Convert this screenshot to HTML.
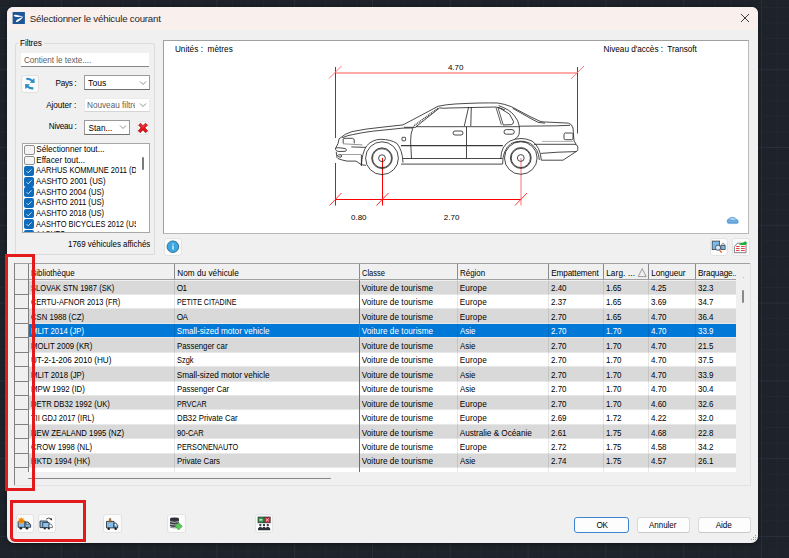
<!DOCTYPE html>
<html><head><meta charset="utf-8"><style>
html,body{margin:0;padding:0;}
body{width:789px;height:558px;overflow:hidden;position:relative;background:#1e232b;font-family:"Liberation Sans",sans-serif;}
*{box-sizing:border-box;}
.a{position:absolute;}
.t{position:absolute;white-space:nowrap;}
svg{position:absolute;overflow:visible;}
</style></head><body>
<svg style="left:0;top:0" width="789" height="558" viewBox="0 0 789 558"><rect x="-1.46" y="0" width="1" height="558" fill="#232831"/><rect x="14.10" y="0" width="1" height="558" fill="#232831"/><rect x="29.66" y="0" width="1" height="558" fill="#232831"/><rect x="45.22" y="0" width="1" height="558" fill="#232831"/><rect x="60.78" y="0" width="1" height="558" fill="#29303a"/><rect x="76.34" y="0" width="1" height="558" fill="#232831"/><rect x="91.90" y="0" width="1" height="558" fill="#232831"/><rect x="107.46" y="0" width="1" height="558" fill="#232831"/><rect x="123.02" y="0" width="1" height="558" fill="#232831"/><rect x="138.58" y="0" width="1" height="558" fill="#29303a"/><rect x="154.14" y="0" width="1" height="558" fill="#232831"/><rect x="169.70" y="0" width="1" height="558" fill="#232831"/><rect x="185.26" y="0" width="1" height="558" fill="#232831"/><rect x="200.82" y="0" width="1" height="558" fill="#232831"/><rect x="216.38" y="0" width="1" height="558" fill="#29303a"/><rect x="231.94" y="0" width="1" height="558" fill="#232831"/><rect x="247.50" y="0" width="1" height="558" fill="#232831"/><rect x="263.06" y="0" width="1" height="558" fill="#232831"/><rect x="278.62" y="0" width="1" height="558" fill="#232831"/><rect x="294.18" y="0" width="1" height="558" fill="#29303a"/><rect x="309.74" y="0" width="1" height="558" fill="#232831"/><rect x="325.30" y="0" width="1" height="558" fill="#232831"/><rect x="340.86" y="0" width="1" height="558" fill="#232831"/><rect x="356.42" y="0" width="1" height="558" fill="#232831"/><rect x="371.98" y="0" width="1" height="558" fill="#29303a"/><rect x="387.54" y="0" width="1" height="558" fill="#232831"/><rect x="403.10" y="0" width="1" height="558" fill="#232831"/><rect x="418.66" y="0" width="1" height="558" fill="#232831"/><rect x="434.22" y="0" width="1" height="558" fill="#232831"/><rect x="449.78" y="0" width="1" height="558" fill="#29303a"/><rect x="465.34" y="0" width="1" height="558" fill="#232831"/><rect x="480.90" y="0" width="1" height="558" fill="#232831"/><rect x="496.46" y="0" width="1" height="558" fill="#232831"/><rect x="512.02" y="0" width="1" height="558" fill="#232831"/><rect x="527.58" y="0" width="1" height="558" fill="#29303a"/><rect x="543.14" y="0" width="1" height="558" fill="#232831"/><rect x="558.70" y="0" width="1" height="558" fill="#232831"/><rect x="574.26" y="0" width="1" height="558" fill="#232831"/><rect x="589.82" y="0" width="1" height="558" fill="#232831"/><rect x="605.38" y="0" width="1" height="558" fill="#29303a"/><rect x="620.94" y="0" width="1" height="558" fill="#232831"/><rect x="636.50" y="0" width="1" height="558" fill="#232831"/><rect x="652.06" y="0" width="1" height="558" fill="#232831"/><rect x="667.62" y="0" width="1" height="558" fill="#232831"/><rect x="683.18" y="0" width="1" height="558" fill="#29303a"/><rect x="698.74" y="0" width="1" height="558" fill="#232831"/><rect x="714.30" y="0" width="1" height="558" fill="#232831"/><rect x="729.86" y="0" width="1" height="558" fill="#232831"/><rect x="745.42" y="0" width="1" height="558" fill="#232831"/><rect x="760.98" y="0" width="1" height="558" fill="#29303a"/><rect x="776.54" y="0" width="1" height="558" fill="#232831"/><rect x="0" y="6.92" width="789" height="1" fill="#232831"/><rect x="0" y="22.48" width="789" height="1" fill="#232831"/><rect x="0" y="38.04" width="789" height="1" fill="#232831"/><rect x="0" y="53.60" width="789" height="1" fill="#232831"/><rect x="0" y="69.16" width="789" height="1" fill="#29303a"/><rect x="0" y="84.72" width="789" height="1" fill="#232831"/><rect x="0" y="100.28" width="789" height="1" fill="#232831"/><rect x="0" y="115.84" width="789" height="1" fill="#232831"/><rect x="0" y="131.40" width="789" height="1" fill="#232831"/><rect x="0" y="146.96" width="789" height="1" fill="#29303a"/><rect x="0" y="162.52" width="789" height="1" fill="#232831"/><rect x="0" y="178.08" width="789" height="1" fill="#232831"/><rect x="0" y="193.64" width="789" height="1" fill="#232831"/><rect x="0" y="209.20" width="789" height="1" fill="#232831"/><rect x="0" y="224.76" width="789" height="1" fill="#29303a"/><rect x="0" y="240.32" width="789" height="1" fill="#232831"/><rect x="0" y="255.88" width="789" height="1" fill="#232831"/><rect x="0" y="271.44" width="789" height="1" fill="#232831"/><rect x="0" y="287.00" width="789" height="1" fill="#232831"/><rect x="0" y="302.56" width="789" height="1" fill="#29303a"/><rect x="0" y="318.12" width="789" height="1" fill="#232831"/><rect x="0" y="333.68" width="789" height="1" fill="#232831"/><rect x="0" y="349.24" width="789" height="1" fill="#232831"/><rect x="0" y="364.80" width="789" height="1" fill="#232831"/><rect x="0" y="380.36" width="789" height="1" fill="#29303a"/><rect x="0" y="395.92" width="789" height="1" fill="#232831"/><rect x="0" y="411.48" width="789" height="1" fill="#232831"/><rect x="0" y="427.04" width="789" height="1" fill="#232831"/><rect x="0" y="442.60" width="789" height="1" fill="#232831"/><rect x="0" y="458.16" width="789" height="1" fill="#29303a"/><rect x="0" y="473.72" width="789" height="1" fill="#232831"/><rect x="0" y="489.28" width="789" height="1" fill="#232831"/><rect x="0" y="504.84" width="789" height="1" fill="#232831"/><rect x="0" y="520.40" width="789" height="1" fill="#232831"/><rect x="0" y="535.96" width="789" height="1" fill="#29303a"/><rect x="0" y="551.52" width="789" height="1" fill="#232831"/></svg>
<div class="a" style="left:7px;top:7px;width:751px;height:535.5px;background:#f0f0f0;border-radius:7px;box-shadow:0 1px 5px rgba(0,0,0,0.45);"></div>
<div class="a" style="left:7px;top:7px;width:751px;height:23px;background:#f9efed;border-radius:6px 6px 0 0;"></div>
<svg style="left:12px;top:12px" width="13" height="12" viewBox="12 12 13 12"><rect x="12.6" y="12" width="12.3" height="12" fill="#1f5796"/><path d="M13.7 15.3Q15 14.5 18 15.2L23.4 16.6Q19 17.3 15.5 16.8Q14 16.5 13.7 15.3Z" fill="#fff"/><path d="M15.9 21.9Q15.7 20.8 17.5 19.5L23.4 16.6Q21.6 19.6 19 21.1Q17 22.3 15.9 21.9Z" fill="#fff"/></svg>
<div class="t" style="left:29.80px;top:14.00px;font-size:9.7px;line-height:9.7px;color:#1f1f1f;letter-spacing:-0.2px;">Sélectionner le véhicule courant</div>
<svg style="left:740px;top:13px" width="10" height="10" viewBox="0 0 10 10"><path d="M1 1L9 9M9 1L1 9" stroke="#333" stroke-width="0.95"/></svg>
<div class="a" style="left:14.5px;top:42.5px;width:140.5px;height:212.0px;border:1px solid #dcdcdc;border-radius:2px;"></div>
<div class="a" style="left:18px;top:38px;width:26px;height:10px;background:#f0f0f0;"></div>
<div class="t" style="left:20.00px;top:40.00px;font-size:8.2px;line-height:8.2px;color:#000;letter-spacing:-0.083px;">Filtres</div>
<div class="a" style="left:20.7px;top:53px;width:128.3px;height:14.299999999999997px;background:#fff;border-bottom:1px solid #868686;"></div>
<div class="t" style="left:23.90px;top:57.00px;font-size:8.2px;line-height:8.2px;color:#5f5f5f;letter-spacing:-0.05px;">Contient le texte....</div>
<div class="a" style="left:21px;top:74.5px;width:18.4px;height:18.5px;background:#fbfbfb;border:1px solid #e0e0e0;border-radius:3px;"></div>
<svg style="left:19px;top:72px" width="22" height="23" viewBox="19 72 22 23"><path d="M26.3 77.7Q30.6 77.5 32.5 79.7L34.4 78L34.7 83.1L29.7 82.8L31.3 81.3Q29.6 79.8 26.3 79.8Z" fill="#2d8dc6"/><path d="M33.4 89.4Q29.1 89.6 27.2 87.4L25.3 89.1L25 84L30 84.3L28.4 85.8Q30.1 87.3 33.4 87.3Z" fill="#2d8dc6"/></svg>
<div class="t" style="left:55.60px;top:80.00px;font-size:8.2px;line-height:8.2px;color:#000;letter-spacing:-0.35px;">Pays :</div>
<div class="a" style="left:84px;top:75px;width:66px;height:15px;background:#fff;border:1px solid #9a9a9a;border-bottom-color:#707070;"></div>
<div class="t" style="left:88.10px;top:79.00px;font-size:8.6px;line-height:8.6px;color:#000;">Tous</div>
<svg style="left:138.7px;top:79.5px" width="8" height="6" viewBox="0 0 8 6"><path d="M1 1.5L4 4.5L7 1.5" fill="none" stroke="#6a6a6a" stroke-width="0.75"/></svg>
<div class="t" style="left:46.20px;top:102.00px;font-size:8.2px;line-height:8.2px;color:#000;letter-spacing:-0.05px;">Ajouter :</div>
<div class="a" style="left:84px;top:98px;width:66px;height:14px;background:#fff;border:1px solid #ececec;border-bottom-color:#d4d4d4;"></div>
<div class="a" style="left:86px;top:99px;width:48.8px;height:12px;overflow:hidden;"><div class="t" style="left:1.00px;top:3.00px;font-size:8.2px;line-height:8.2px;color:#606060;">Nouveau filtre</div>
</div>
<svg style="left:138.8px;top:101.8px" width="8" height="6" viewBox="0 0 8 6"><path d="M1 1.5L4 4.5L7 1.5" fill="none" stroke="#6a6a6a" stroke-width="0.75"/></svg>
<div class="t" style="left:48.80px;top:123.00px;font-size:8.2px;line-height:8.2px;color:#000;letter-spacing:-0.3px;">Niveau :</div>
<div class="a" style="left:84px;top:120px;width:46px;height:15px;background:#fff;border:1px solid #9a9a9a;border-bottom-color:#707070;"></div>
<div class="t" style="left:88.60px;top:125.00px;font-size:8.2px;line-height:8.2px;color:#000;">Stan...</div>
<svg style="left:119.2px;top:124px" width="8" height="6" viewBox="0 0 8 6"><path d="M1 1.5L4 4.5L7 1.5" fill="none" stroke="#6a6a6a" stroke-width="0.75"/></svg>
<div class="a" style="left:137px;top:121px;width:12px;height:14px;background:#fbfbfb;border:1px solid #e6e6e6;border-radius:2px;"></div>
<svg style="left:136px;top:120px" width="14" height="16" viewBox="136 120 14 16"><path d="M138.6 125L140.6 123.2L142.9 125.8L145.4 123.2L147.6 125.1L145 127.8L147.7 130.9L145.6 132.8L142.9 129.9L140.2 132.8L138.2 130.8L140.9 127.8Z" fill="#e4161b" stroke="#8a0c0f" stroke-width="0.6" stroke-linejoin="round"/><path d="M140.2 124.4L142.9 127.3L145.5 124.3" fill="none" stroke="#ff6a6a" stroke-width="0.6"/></svg>
<div class="a" style="left:22px;top:143px;width:128px;height:90px;background:#fff;border:1px solid #a8a8a8;"></div>
<div class="a" style="left:23.4px;top:144.2px;width:112.6px;height:87.8px;overflow:hidden;"><div class="a" style="left:1px;top:0.70px;width:10.2px;height:9.8px;background:#f4f4f4;border:1px solid #909090;border-radius:2px;"></div><div class="t" style="left:12.80px;top:2.00px;font-size:8.2px;line-height:8.2px;color:#000;letter-spacing:0.001px;">Sélectionner tout...</div>
<div class="a" style="left:1px;top:11.33px;width:10.2px;height:9.8px;background:#f4f4f4;border:1px solid #909090;border-radius:2px;"></div><div class="t" style="left:12.80px;top:13.00px;font-size:8.2px;line-height:8.2px;color:#000;letter-spacing:0.025px;">Effacer tout...</div>
<div class="a" style="left:1px;top:21.96px;width:10px;height:9.8px;background:#0f6cbd;border-radius:2px;"></div><svg style="left:1px;top:21.96px" width="10" height="10" viewBox="0 0 10 10"><path d="M2.6 5.2L4.2 6.8L7.5 3.4" fill="none" stroke="#fff" stroke-width="0.8"/></svg><div class="t" style="left:12.80px;top:23.00px;font-size:8.2px;line-height:8.2px;color:#000;transform:scaleX(0.9191);transform-origin:0 0;">AARHUS KOMMUNE 2011 (DK)</div>
<div class="a" style="left:1px;top:32.59px;width:10px;height:9.8px;background:#0f6cbd;border-radius:2px;"></div><svg style="left:1px;top:32.59px" width="10" height="10" viewBox="0 0 10 10"><path d="M2.6 5.2L4.2 6.8L7.5 3.4" fill="none" stroke="#fff" stroke-width="0.8"/></svg><div class="t" style="left:12.80px;top:34.00px;font-size:8.2px;line-height:8.2px;color:#000;transform:scaleX(0.9520);transform-origin:0 0;">AASHTO 2001 (US)</div>
<div class="a" style="left:1px;top:43.22px;width:10px;height:9.8px;background:#0f6cbd;border-radius:2px;"></div><svg style="left:1px;top:43.22px" width="10" height="10" viewBox="0 0 10 10"><path d="M2.6 5.2L4.2 6.8L7.5 3.4" fill="none" stroke="#fff" stroke-width="0.8"/></svg><div class="t" style="left:12.80px;top:45.00px;font-size:8.2px;line-height:8.2px;color:#000;transform:scaleX(0.9320);transform-origin:0 0;">AASHTO 2004 (US)</div>
<div class="a" style="left:1px;top:53.85px;width:10px;height:9.8px;background:#0f6cbd;border-radius:2px;"></div><svg style="left:1px;top:53.85px" width="10" height="10" viewBox="0 0 10 10"><path d="M2.6 5.2L4.2 6.8L7.5 3.4" fill="none" stroke="#fff" stroke-width="0.8"/></svg><div class="t" style="left:12.80px;top:55.00px;font-size:8.2px;line-height:8.2px;color:#000;transform:scaleX(0.9398);transform-origin:0 0;">AASHTO 2011 (US)</div>
<div class="a" style="left:1px;top:64.48px;width:10px;height:9.8px;background:#0f6cbd;border-radius:2px;"></div><svg style="left:1px;top:64.48px" width="10" height="10" viewBox="0 0 10 10"><path d="M2.6 5.2L4.2 6.8L7.5 3.4" fill="none" stroke="#fff" stroke-width="0.8"/></svg><div class="t" style="left:12.80px;top:66.00px;font-size:8.2px;line-height:8.2px;color:#000;transform:scaleX(0.9320);transform-origin:0 0;">AASHTO 2018 (US)</div>
<div class="a" style="left:1px;top:75.11px;width:10px;height:9.8px;background:#0f6cbd;border-radius:2px;"></div><svg style="left:1px;top:75.11px" width="10" height="10" viewBox="0 0 10 10"><path d="M2.6 5.2L4.2 6.8L7.5 3.4" fill="none" stroke="#fff" stroke-width="0.8"/></svg><div class="t" style="left:12.80px;top:77.00px;font-size:8.2px;line-height:8.2px;color:#000;transform:scaleX(0.9092);transform-origin:0 0;">AASHTO BICYCLES 2012 (US)</div>
<div class="a" style="left:1px;top:85.74px;width:10px;height:9.8px;background:#0f6cbd;border-radius:2px;"></div><svg style="left:1px;top:85.74px" width="10" height="10" viewBox="0 0 10 10"><path d="M2.6 5.2L4.2 6.8L7.5 3.4" fill="none" stroke="#fff" stroke-width="0.8"/></svg><div class="t" style="left:12.80px;top:87.00px;font-size:8.2px;line-height:8.2px;color:#000;transform:scaleX(0.8790);transform-origin:0 0;">AASHTO</div>
</div>
<div class="a" style="left:141.5px;top:157px;width:2.0px;height:13px;background:#7a7a7a;border-radius:1px;"></div>
<div class="t" style="left:67.60px;top:241.00px;font-size:8.2px;line-height:8.2px;color:#000;transform:scaleX(0.9686);transform-origin:0 0;">1769 véhicules affichés</div>
<div class="a" style="left:164px;top:238px;width:18px;height:18px;background:#fbfbfb;border:1px solid #e3e3e3;border-radius:3px;"></div>
<svg style="left:166px;top:240px" width="14" height="14" viewBox="0 0 14 14"><circle cx="6.9" cy="6.7" r="5.8" fill="#3ba7e0" stroke="#245a80" stroke-width="0.8"/><rect x="6.4" y="5.6" width="1.2" height="4" fill="#fff"/><rect x="6.4" y="3.6" width="1.2" height="1.1" fill="#fff"/></svg>
<div class="a" style="left:163px;top:40px;width:586px;height:193.5px;background:#fff;border-top:1px solid #a0a0a0;border-left:1px solid #a0a0a0;border-right:1px solid #b8b8b8;border-bottom:1px solid #b8b8b8;"></div>
<div class="t" style="left:174.90px;top:46.00px;font-size:8.2px;line-height:8.2px;color:#000;letter-spacing:0.037px;">Unités :&nbsp; mètres</div>
<div class="t" style="left:603.60px;top:46.00px;font-size:8.2px;line-height:8.2px;color:#000;letter-spacing:-0.030px;">Niveau d'accès :&nbsp; Transoft</div>
<div class="t" style="left:447.90px;top:64.00px;font-size:8px;line-height:8px;color:#000;">4.70</div>
<div class="t" style="left:351.00px;top:214.00px;font-size:8px;line-height:8px;color:#000;">0.80</div>
<div class="t" style="left:443.80px;top:214.00px;font-size:8px;line-height:8px;color:#000;">2.70</div>
<svg style="left:0;top:0" width="789" height="558" viewBox="0 0 789 558">
<g fill="none" stroke="#f00" stroke-width="1">
<path d="M335 73H577" stroke="#ff8c8c" stroke-width="1.3"/>
<path d="M335.5 67V138M335.5 163V205.5M577.5 67V133.5"/>
<path d="M335 199.5H521"/>
<path d="M382.5 158V205.5"/>
<path d="M521 158V205.5" stroke="#ff7070"/>
<path d="M329 78.5L341.5 66M571 78.8L584 66" stroke="#ff7a7a"/>
<path d="M329.5 205.5L341.5 193M376.5 205.5L388.5 193M515 205.5L527 193" stroke="#ff3030"/>
</g>
<g fill="none" stroke="#1c1c1c" stroke-width="0.8">
<!-- hood outer + windshield + roof + trunk -->
<path d="M339.1 138.8Q345 133.5 352 131.6Q365 128.8 383 127.1L403 124.9L438 106.3Q446 104.5 455 104Q480 102.6 497.6 103Q505 104 511.6 106.8L530 116.5L539.4 121Q542 122 545 122L568.4 123.1Q572 124 573 128L574 141L576 144"/>
<!-- hood inner -->
<path d="M342.1 137.8Q347 135.5 352.3 134.7Q362 132.5 372.6 131.2L403 128.1L412 128"/>
<!-- windshield inner & roof inner -->
<path d="M416 126.7L439.6 107.9Q444 108.6 449 108L496 107Q501 108 505 110"/>
<path d="M414.2 125.6L438.4 108" stroke-dasharray="1 0.9" stroke-width="1.5" stroke="#3a3a3a"/>
<!-- beltline -->
<path d="M404 127.3H416M416 126.7H520M520 126.2L557.6 125.8L570 125.3"/>
<!-- B pillar -->
<path d="M468.6 107L464.3 126M471.3 107L470.8 126"/>
<!-- C pillar hatch -->
<path d="M496 107.6L501.4 124.8M498 107.6L503.2 124.8" stroke-width="0.7"/>
<!-- rear quarter window -->
<path d="M498.5 107.4L509.4 114L513.5 121.4Q513.6 124.2 511.5 124.6L503 125"/>
<!-- trunk inner -->
<path d="M512.7 108.3L530 118.1L538 122.3L545 123.2"/>
<!-- doors -->
<path d="M413.3 126.5Q410.2 134 410.6 142L411.5 158.5"/>
<path d="M466.5 126.7V158.5"/>
<path d="M498.5 105.6Q510 109.5 514.3 115.6Q518.6 120.5 519.3 126.3Q519.6 132 519 134.5Q518.2 137.2 515 139"/>
<!-- handles -->
<rect x="453" y="131" width="10" height="4" rx="2"/>
<rect x="504" y="129.6" width="10.3" height="4.6" rx="2.3"/>
<!-- mirror -->
<rect x="402" y="137.3" width="3.6" height="3.5" rx="0.8"/>
<!-- side lines -->
<path d="M401 145.6H502.8" stroke-width="1.4" stroke="#3a3a3a"/>
<path d="M403 158.5H502.5M401 164.1H502.5"/>
<!-- front end -->
<path d="M343.2 143.5V139Q343.5 138.3 345 138.3H352.5Q354.3 138.5 354.3 141V143.4"/>
<path d="M343 143.8L362.4 144.9" stroke="#777"/>
<path d="M339.1 138.8Q338.5 141 338.1 143.4L335.5 148.4"/>
<path d="M335.5 148.4Q336 147.5 340 147.8L345.5 148.6Q347.5 150 345.5 151.3L339 151.5Q335.2 151 335.5 148.4Z"/>
<path d="M351.3 146.9L365.5 147.4"/>
<path d="M337.5 155.5Q338 154.4 341 154.8Q342.5 156 341 157.2Q338.2 157.4 337.5 155.5Z"/>
<path d="M341.1 154.5H361.4" stroke="#888"/>
<path d="M336.2 151.8L337 157.5L338 158.6Q343 160.5 347.2 161.1H356L361.4 164.7L366 165.4"/>
<path d="M361.4 155V166"/>
<!-- front arch -->
<path d="M361.4 165.2Q362 153 366.5 146Q372 139.6 380.7 139.3Q391 139.5 396.9 143.4Q402.5 150 403 162.6"/>
<!-- rear end -->
<rect x="564" y="133" width="9" height="6.7" rx="1.5"/>
<path d="M542 141.4H573" stroke="#999"/>
<path d="M534 144.3H575Q577.6 144.5 577.8 147V149.5Q577.5 151.5 575.5 152L563 160.2H541.3"/>
<path d="M541 153.4L558 152.2L576 151.6"/>
<!-- rear arch -->
<path d="M500.8 158.5Q501 146 510 141Q521 136 532 141Q540.5 147 541.3 160.2"/>
<path d="M502.6 164Q502.5 150 511 143.5Q521 138.8 530.5 143.5Q538.8 149 539.3 160"/>
<!-- wheels -->
<circle cx="382" cy="158.2" r="16.4"/>
<circle cx="382" cy="158.2" r="9.5" stroke-width="0.8"/><circle cx="382" cy="158.2" r="10.3" stroke-width="0.8"/>
<circle cx="382" cy="158.2" r="3.4"/>
<circle cx="520.8" cy="158" r="16.3"/>
<circle cx="520.8" cy="158" r="9.6" stroke-width="0.8"/><circle cx="520.8" cy="158" r="10.4" stroke-width="0.8"/>
<circle cx="520.8" cy="158" r="3.4"/>
</g>
</svg>
<svg style="left:725px;top:215px" width="15" height="11" viewBox="725 215 15 11"><path d="M727.1 220.4Q727.3 219.3 728.6 219L729.8 217.8Q730.6 217.3 732.6 217.3Q734.6 217.5 735.4 218.3L736.4 219.2Q738.2 219.6 738.3 221V222.2Q738.1 223.5 736.6 223.6H728.6Q727.2 223.4 727.1 222.1Z" fill="#5b9fdc" stroke="#4a8ed0" stroke-width="0.4"/><path d="M729.2 219.5L730.4 218.2Q732.8 217.8 735 218.6L735.9 219.7Q732.5 220.3 729.2 219.5Z" fill="#b5d6f2"/><path d="M728 221.3H737.2" stroke="#9cc8ee" stroke-width="0.6"/></svg>
<div class="a" style="left:709.5px;top:237.5px;width:18.0px;height:18.0px;background:#fbfbfb;border:1px solid #e3e3e3;border-radius:3px;"></div>
<div class="a" style="left:731.5px;top:237.5px;width:18.0px;height:18.0px;background:#fbfbfb;border:1px solid #e3e3e3;border-radius:3px;"></div>
<svg style="left:706px;top:234px" width="46" height="24" viewBox="706 234 46 24"><rect x="712.2" y="241.1" width="7.4" height="8.5" fill="#7ab8e8" stroke="#3a3f46" stroke-width="0.8"/><path d="M719.6 250.2L721.8 252.6" stroke="#e0603a" stroke-width="1.3"/><circle cx="718" cy="247.7" r="2.6" fill="#dcebf8" stroke="#3a3f46" stroke-width="0.8"/><rect x="720.9" y="245.4" width="4.2" height="4.1" fill="#7ab8e8" stroke="#3a3f46" stroke-width="0.8"/><path d="M721.4 245.2L722.6 243.4H723.8L724.6 245.2Z" fill="#fff" stroke="#3a3f46" stroke-width="0.5"/><path d="M734.4 246.6L737.4 243.2H746V252.7H734.4Z" fill="#fbfbfb" stroke="#5a5e64" stroke-width="0.8"/><path d="M736 246.5H739.6M741 246.5H744.8M736 248.5H739.6M741 248.5H744.8M736 250.5H739.6M741 250.5H744.8" stroke="#e0474c" stroke-width="1"/><path d="M738.8 244.6Q741 242.6 743.4 242.8Q744.6 241 746.4 241.8Q747.4 243.4 746 244.6Q743 245.6 738.8 244.6Z" fill="#19b030"/></svg>
<div class="a" style="left:14px;top:263px;width:737px;height:223px;background:#f0f0f0;"></div>
<div class="a" style="left:29px;top:281px;width:707px;height:13px;background:#d9d9d9;"></div>
<div class="a" style="left:29px;top:294px;width:707px;height:1px;background:#e8e8e8;"></div>
<div class="a" style="left:15px;top:294px;width:13px;height:1px;background:#808080;"></div>
<div class="t" style="left:31.00px;top:285.00px;font-size:8.2px;line-height:8.2px;color:#000;transform:scaleX(0.9260);transform-origin:0 0;">SLOVAK STN 1987 (SK)</div>
<div class="t" style="left:176.70px;top:285.00px;font-size:8.2px;line-height:8.2px;color:#000;letter-spacing:-0.500px;">O1</div>
<div class="t" style="left:361.70px;top:285.00px;font-size:8.2px;line-height:8.2px;color:#000;letter-spacing:0.047px;">Voiture de tourisme</div>
<div class="t" style="left:459.70px;top:285.00px;font-size:8.2px;line-height:8.2px;color:#000;letter-spacing:0.119px;">Europe</div>
<div class="t" style="left:550.70px;top:285.00px;font-size:8.2px;line-height:8.2px;color:#000;transform:scaleX(0.9720);transform-origin:0 0;">2.40</div>
<div class="t" style="left:605.70px;top:285.00px;font-size:8.2px;line-height:8.2px;color:#000;transform:scaleX(0.9720);transform-origin:0 0;">1.65</div>
<div class="t" style="left:650.70px;top:285.00px;font-size:8.2px;line-height:8.2px;color:#000;transform:scaleX(0.9720);transform-origin:0 0;">4.25</div>
<div class="t" style="left:697.70px;top:285.00px;font-size:8.2px;line-height:8.2px;color:#000;transform:scaleX(0.9720);transform-origin:0 0;">32.3</div>
<div class="a" style="left:29px;top:295px;width:707px;height:13px;background:#ffffff;"></div>
<div class="a" style="left:29px;top:308px;width:707px;height:1px;background:#e8e8e8;"></div>
<div class="a" style="left:15px;top:308px;width:13px;height:1px;background:#808080;"></div>
<div class="t" style="left:31.00px;top:299.00px;font-size:8.2px;line-height:8.2px;color:#000;transform:scaleX(0.9059);transform-origin:0 0;">CERTU-AFNOR 2013 (FR)</div>
<div class="t" style="left:176.70px;top:299.00px;font-size:8.2px;line-height:8.2px;color:#000;transform:scaleX(0.8680);transform-origin:0 0;">PETITE CITADINE</div>
<div class="t" style="left:361.70px;top:299.00px;font-size:8.2px;line-height:8.2px;color:#000;letter-spacing:0.047px;">Voiture de tourisme</div>
<div class="t" style="left:459.70px;top:299.00px;font-size:8.2px;line-height:8.2px;color:#000;letter-spacing:0.119px;">Europe</div>
<div class="t" style="left:550.70px;top:299.00px;font-size:8.2px;line-height:8.2px;color:#000;transform:scaleX(0.9720);transform-origin:0 0;">2.37</div>
<div class="t" style="left:605.70px;top:299.00px;font-size:8.2px;line-height:8.2px;color:#000;transform:scaleX(0.9720);transform-origin:0 0;">1.65</div>
<div class="t" style="left:650.70px;top:299.00px;font-size:8.2px;line-height:8.2px;color:#000;transform:scaleX(0.9720);transform-origin:0 0;">3.69</div>
<div class="t" style="left:697.70px;top:299.00px;font-size:8.2px;line-height:8.2px;color:#000;transform:scaleX(0.9720);transform-origin:0 0;">34.7</div>
<div class="a" style="left:29px;top:309px;width:707px;height:14px;background:#d9d9d9;"></div>
<div class="a" style="left:29px;top:323px;width:707px;height:1px;background:#e8e8e8;"></div>
<div class="a" style="left:15px;top:323px;width:13px;height:1px;background:#808080;"></div>
<div class="t" style="left:31.00px;top:314.00px;font-size:8.2px;line-height:8.2px;color:#000;transform:scaleX(0.9394);transform-origin:0 0;">CSN 1988 (CZ)</div>
<div class="t" style="left:176.70px;top:314.00px;font-size:8.2px;line-height:8.2px;color:#000;letter-spacing:-0.500px;">OA</div>
<div class="t" style="left:361.70px;top:314.00px;font-size:8.2px;line-height:8.2px;color:#000;letter-spacing:0.047px;">Voiture de tourisme</div>
<div class="t" style="left:459.70px;top:314.00px;font-size:8.2px;line-height:8.2px;color:#000;letter-spacing:0.119px;">Europe</div>
<div class="t" style="left:550.70px;top:314.00px;font-size:8.2px;line-height:8.2px;color:#000;transform:scaleX(0.9720);transform-origin:0 0;">2.70</div>
<div class="t" style="left:605.70px;top:314.00px;font-size:8.2px;line-height:8.2px;color:#000;transform:scaleX(0.9720);transform-origin:0 0;">1.65</div>
<div class="t" style="left:650.70px;top:314.00px;font-size:8.2px;line-height:8.2px;color:#000;transform:scaleX(0.9720);transform-origin:0 0;">4.70</div>
<div class="t" style="left:697.70px;top:314.00px;font-size:8.2px;line-height:8.2px;color:#000;transform:scaleX(0.9720);transform-origin:0 0;">36.4</div>
<div class="a" style="left:29px;top:324px;width:707px;height:13px;background:#0078d7;"></div>
<div class="a" style="left:29px;top:337px;width:707px;height:1px;background:#e8e8e8;"></div>
<div class="a" style="left:15px;top:337px;width:13px;height:1px;background:#808080;"></div>
<div class="t" style="left:31.00px;top:328.00px;font-size:8.2px;line-height:8.2px;color:#fff;transform:scaleX(0.9417);transform-origin:0 0;">MLIT 2014 (JP)</div>
<div class="t" style="left:176.70px;top:328.00px;font-size:8.2px;line-height:8.2px;color:#fff;letter-spacing:-0.020px;">Small-sized motor vehicle</div>
<div class="t" style="left:361.70px;top:328.00px;font-size:8.2px;line-height:8.2px;color:#fff;letter-spacing:0.047px;">Voiture de tourisme</div>
<div class="t" style="left:459.70px;top:328.00px;font-size:8.2px;line-height:8.2px;color:#fff;transform:scaleX(0.9663);transform-origin:0 0;">Asie</div>
<div class="t" style="left:550.70px;top:328.00px;font-size:8.2px;line-height:8.2px;color:#fff;transform:scaleX(0.9720);transform-origin:0 0;">2.70</div>
<div class="t" style="left:605.70px;top:328.00px;font-size:8.2px;line-height:8.2px;color:#fff;transform:scaleX(0.9720);transform-origin:0 0;">1.70</div>
<div class="t" style="left:650.70px;top:328.00px;font-size:8.2px;line-height:8.2px;color:#fff;transform:scaleX(0.9720);transform-origin:0 0;">4.70</div>
<div class="t" style="left:697.70px;top:328.00px;font-size:8.2px;line-height:8.2px;color:#fff;transform:scaleX(0.9720);transform-origin:0 0;">33.9</div>
<div class="a" style="left:29px;top:338px;width:707px;height:14px;background:#d9d9d9;"></div>
<div class="a" style="left:29px;top:352px;width:707px;height:1px;background:#e8e8e8;"></div>
<div class="a" style="left:15px;top:352px;width:13px;height:1px;background:#808080;"></div>
<div class="t" style="left:31.00px;top:343.00px;font-size:8.2px;line-height:8.2px;color:#000;transform:scaleX(0.9508);transform-origin:0 0;">MOLIT 2009 (KR)</div>
<div class="t" style="left:176.70px;top:343.00px;font-size:8.2px;line-height:8.2px;color:#000;transform:scaleX(0.9565);transform-origin:0 0;">Passenger car</div>
<div class="t" style="left:361.70px;top:343.00px;font-size:8.2px;line-height:8.2px;color:#000;letter-spacing:0.047px;">Voiture de tourisme</div>
<div class="t" style="left:459.70px;top:343.00px;font-size:8.2px;line-height:8.2px;color:#000;transform:scaleX(0.9663);transform-origin:0 0;">Asie</div>
<div class="t" style="left:550.70px;top:343.00px;font-size:8.2px;line-height:8.2px;color:#000;transform:scaleX(0.9720);transform-origin:0 0;">2.70</div>
<div class="t" style="left:605.70px;top:343.00px;font-size:8.2px;line-height:8.2px;color:#000;transform:scaleX(0.9720);transform-origin:0 0;">1.70</div>
<div class="t" style="left:650.70px;top:343.00px;font-size:8.2px;line-height:8.2px;color:#000;transform:scaleX(0.9720);transform-origin:0 0;">4.70</div>
<div class="t" style="left:697.70px;top:343.00px;font-size:8.2px;line-height:8.2px;color:#000;transform:scaleX(0.9720);transform-origin:0 0;">21.5</div>
<div class="a" style="left:29px;top:353px;width:707px;height:13px;background:#ffffff;"></div>
<div class="a" style="left:29px;top:366px;width:707px;height:1px;background:#e8e8e8;"></div>
<div class="a" style="left:15px;top:366px;width:13px;height:1px;background:#808080;"></div>
<div class="t" style="left:31.00px;top:357.00px;font-size:8.2px;line-height:8.2px;color:#000;letter-spacing:-0.055px;">UT-2-1-206 2010 (HU)</div>
<div class="t" style="left:176.70px;top:357.00px;font-size:8.2px;line-height:8.2px;color:#000;transform:scaleX(0.9064);transform-origin:0 0;">Szgk</div>
<div class="t" style="left:361.70px;top:357.00px;font-size:8.2px;line-height:8.2px;color:#000;letter-spacing:0.047px;">Voiture de tourisme</div>
<div class="t" style="left:459.70px;top:357.00px;font-size:8.2px;line-height:8.2px;color:#000;letter-spacing:0.119px;">Europe</div>
<div class="t" style="left:550.70px;top:357.00px;font-size:8.2px;line-height:8.2px;color:#000;transform:scaleX(0.9720);transform-origin:0 0;">2.70</div>
<div class="t" style="left:605.70px;top:357.00px;font-size:8.2px;line-height:8.2px;color:#000;transform:scaleX(0.9720);transform-origin:0 0;">1.70</div>
<div class="t" style="left:650.70px;top:357.00px;font-size:8.2px;line-height:8.2px;color:#000;transform:scaleX(0.9720);transform-origin:0 0;">4.70</div>
<div class="t" style="left:697.70px;top:357.00px;font-size:8.2px;line-height:8.2px;color:#000;transform:scaleX(0.9720);transform-origin:0 0;">37.5</div>
<div class="a" style="left:29px;top:367px;width:707px;height:14px;background:#d9d9d9;"></div>
<div class="a" style="left:29px;top:381px;width:707px;height:1px;background:#e8e8e8;"></div>
<div class="a" style="left:15px;top:381px;width:13px;height:1px;background:#808080;"></div>
<div class="t" style="left:31.00px;top:372.00px;font-size:8.2px;line-height:8.2px;color:#000;transform:scaleX(0.9488);transform-origin:0 0;">MLIT 2018 (JP)</div>
<div class="t" style="left:176.70px;top:372.00px;font-size:8.2px;line-height:8.2px;color:#000;letter-spacing:-0.020px;">Small-sized motor vehicle</div>
<div class="t" style="left:361.70px;top:372.00px;font-size:8.2px;line-height:8.2px;color:#000;letter-spacing:0.047px;">Voiture de tourisme</div>
<div class="t" style="left:459.70px;top:372.00px;font-size:8.2px;line-height:8.2px;color:#000;transform:scaleX(0.9663);transform-origin:0 0;">Asie</div>
<div class="t" style="left:550.70px;top:372.00px;font-size:8.2px;line-height:8.2px;color:#000;transform:scaleX(0.9720);transform-origin:0 0;">2.70</div>
<div class="t" style="left:605.70px;top:372.00px;font-size:8.2px;line-height:8.2px;color:#000;transform:scaleX(0.9720);transform-origin:0 0;">1.70</div>
<div class="t" style="left:650.70px;top:372.00px;font-size:8.2px;line-height:8.2px;color:#000;transform:scaleX(0.9720);transform-origin:0 0;">4.70</div>
<div class="t" style="left:697.70px;top:372.00px;font-size:8.2px;line-height:8.2px;color:#000;transform:scaleX(0.9720);transform-origin:0 0;">33.9</div>
<div class="a" style="left:29px;top:382px;width:707px;height:13px;background:#ffffff;"></div>
<div class="a" style="left:29px;top:395px;width:707px;height:1px;background:#e8e8e8;"></div>
<div class="a" style="left:15px;top:395px;width:13px;height:1px;background:#808080;"></div>
<div class="t" style="left:31.00px;top:386.00px;font-size:8.2px;line-height:8.2px;color:#000;transform:scaleX(0.9535);transform-origin:0 0;">MPW 1992 (ID)</div>
<div class="t" style="left:176.70px;top:386.00px;font-size:8.2px;line-height:8.2px;color:#000;transform:scaleX(0.9538);transform-origin:0 0;">Passenger Car</div>
<div class="t" style="left:361.70px;top:386.00px;font-size:8.2px;line-height:8.2px;color:#000;letter-spacing:0.047px;">Voiture de tourisme</div>
<div class="t" style="left:459.70px;top:386.00px;font-size:8.2px;line-height:8.2px;color:#000;transform:scaleX(0.9663);transform-origin:0 0;">Asie</div>
<div class="t" style="left:550.70px;top:386.00px;font-size:8.2px;line-height:8.2px;color:#000;transform:scaleX(0.9720);transform-origin:0 0;">2.70</div>
<div class="t" style="left:605.70px;top:386.00px;font-size:8.2px;line-height:8.2px;color:#000;transform:scaleX(0.9720);transform-origin:0 0;">1.70</div>
<div class="t" style="left:650.70px;top:386.00px;font-size:8.2px;line-height:8.2px;color:#000;transform:scaleX(0.9720);transform-origin:0 0;">4.70</div>
<div class="t" style="left:697.70px;top:386.00px;font-size:8.2px;line-height:8.2px;color:#000;transform:scaleX(0.9720);transform-origin:0 0;">30.4</div>
<div class="a" style="left:29px;top:396px;width:707px;height:13px;background:#d9d9d9;"></div>
<div class="a" style="left:29px;top:409px;width:707px;height:1px;background:#e8e8e8;"></div>
<div class="a" style="left:15px;top:409px;width:13px;height:1px;background:#808080;"></div>
<div class="t" style="left:31.00px;top:401.00px;font-size:8.2px;line-height:8.2px;color:#000;transform:scaleX(0.9310);transform-origin:0 0;">DETR DB32 1992 (UK)</div>
<div class="t" style="left:176.70px;top:401.00px;font-size:8.2px;line-height:8.2px;color:#000;transform:scaleX(0.8710);transform-origin:0 0;">PRVCAR</div>
<div class="t" style="left:361.70px;top:401.00px;font-size:8.2px;line-height:8.2px;color:#000;letter-spacing:0.047px;">Voiture de tourisme</div>
<div class="t" style="left:459.70px;top:401.00px;font-size:8.2px;line-height:8.2px;color:#000;letter-spacing:0.119px;">Europe</div>
<div class="t" style="left:550.70px;top:401.00px;font-size:8.2px;line-height:8.2px;color:#000;transform:scaleX(0.9720);transform-origin:0 0;">2.70</div>
<div class="t" style="left:605.70px;top:401.00px;font-size:8.2px;line-height:8.2px;color:#000;transform:scaleX(0.9720);transform-origin:0 0;">1.70</div>
<div class="t" style="left:650.70px;top:401.00px;font-size:8.2px;line-height:8.2px;color:#000;transform:scaleX(0.9720);transform-origin:0 0;">4.60</div>
<div class="t" style="left:697.70px;top:401.00px;font-size:8.2px;line-height:8.2px;color:#000;transform:scaleX(0.9720);transform-origin:0 0;">32.6</div>
<div class="a" style="left:29px;top:410px;width:707px;height:14px;background:#ffffff;"></div>
<div class="a" style="left:29px;top:424px;width:707px;height:1px;background:#e8e8e8;"></div>
<div class="a" style="left:15px;top:424px;width:13px;height:1px;background:#808080;"></div>
<div class="t" style="left:31.00px;top:415.00px;font-size:8.2px;line-height:8.2px;color:#000;transform:scaleX(0.9137);transform-origin:0 0;">TII GDJ 2017 (IRL)</div>
<div class="t" style="left:176.70px;top:415.00px;font-size:8.2px;line-height:8.2px;color:#000;transform:scaleX(0.9526);transform-origin:0 0;">DB32 Private Car</div>
<div class="t" style="left:361.70px;top:415.00px;font-size:8.2px;line-height:8.2px;color:#000;letter-spacing:0.047px;">Voiture de tourisme</div>
<div class="t" style="left:459.70px;top:415.00px;font-size:8.2px;line-height:8.2px;color:#000;letter-spacing:0.119px;">Europe</div>
<div class="t" style="left:550.70px;top:415.00px;font-size:8.2px;line-height:8.2px;color:#000;transform:scaleX(0.9720);transform-origin:0 0;">2.69</div>
<div class="t" style="left:605.70px;top:415.00px;font-size:8.2px;line-height:8.2px;color:#000;transform:scaleX(0.9720);transform-origin:0 0;">1.72</div>
<div class="t" style="left:650.70px;top:415.00px;font-size:8.2px;line-height:8.2px;color:#000;transform:scaleX(0.9720);transform-origin:0 0;">4.22</div>
<div class="t" style="left:697.70px;top:415.00px;font-size:8.2px;line-height:8.2px;color:#000;transform:scaleX(0.9720);transform-origin:0 0;">32.0</div>
<div class="a" style="left:29px;top:425px;width:707px;height:13px;background:#d9d9d9;"></div>
<div class="a" style="left:29px;top:438px;width:707px;height:1px;background:#e8e8e8;"></div>
<div class="a" style="left:15px;top:438px;width:13px;height:1px;background:#808080;"></div>
<div class="t" style="left:31.00px;top:430.00px;font-size:8.2px;line-height:8.2px;color:#000;transform:scaleX(0.9463);transform-origin:0 0;">NEW ZEALAND 1995 (NZ)</div>
<div class="t" style="left:176.70px;top:430.00px;font-size:8.2px;line-height:8.2px;color:#000;transform:scaleX(0.9202);transform-origin:0 0;">90-CAR</div>
<div class="t" style="left:361.70px;top:430.00px;font-size:8.2px;line-height:8.2px;color:#000;letter-spacing:0.047px;">Voiture de tourisme</div>
<div class="t" style="left:459.70px;top:430.00px;font-size:8.2px;line-height:8.2px;color:#000;letter-spacing:-0.015px;">Australie &amp; Océanie</div>
<div class="t" style="left:550.70px;top:430.00px;font-size:8.2px;line-height:8.2px;color:#000;transform:scaleX(0.9720);transform-origin:0 0;">2.61</div>
<div class="t" style="left:605.70px;top:430.00px;font-size:8.2px;line-height:8.2px;color:#000;transform:scaleX(0.9720);transform-origin:0 0;">1.75</div>
<div class="t" style="left:650.70px;top:430.00px;font-size:8.2px;line-height:8.2px;color:#000;transform:scaleX(0.9720);transform-origin:0 0;">4.68</div>
<div class="t" style="left:697.70px;top:430.00px;font-size:8.2px;line-height:8.2px;color:#000;transform:scaleX(0.9720);transform-origin:0 0;">22.8</div>
<div class="a" style="left:29px;top:439px;width:707px;height:14px;background:#ffffff;"></div>
<div class="a" style="left:29px;top:453px;width:707px;height:1px;background:#e8e8e8;"></div>
<div class="a" style="left:15px;top:453px;width:13px;height:1px;background:#808080;"></div>
<div class="t" style="left:31.00px;top:444.00px;font-size:8.2px;line-height:8.2px;color:#000;transform:scaleX(0.9457);transform-origin:0 0;">CROW 1998 (NL)</div>
<div class="t" style="left:176.70px;top:444.00px;font-size:8.2px;line-height:8.2px;color:#000;transform:scaleX(0.8943);transform-origin:0 0;">PERSONENAUTO</div>
<div class="t" style="left:361.70px;top:444.00px;font-size:8.2px;line-height:8.2px;color:#000;letter-spacing:0.047px;">Voiture de tourisme</div>
<div class="t" style="left:459.70px;top:444.00px;font-size:8.2px;line-height:8.2px;color:#000;letter-spacing:0.119px;">Europe</div>
<div class="t" style="left:550.70px;top:444.00px;font-size:8.2px;line-height:8.2px;color:#000;transform:scaleX(0.9720);transform-origin:0 0;">2.72</div>
<div class="t" style="left:605.70px;top:444.00px;font-size:8.2px;line-height:8.2px;color:#000;transform:scaleX(0.9720);transform-origin:0 0;">1.75</div>
<div class="t" style="left:650.70px;top:444.00px;font-size:8.2px;line-height:8.2px;color:#000;transform:scaleX(0.9720);transform-origin:0 0;">4.58</div>
<div class="t" style="left:697.70px;top:444.00px;font-size:8.2px;line-height:8.2px;color:#000;transform:scaleX(0.9720);transform-origin:0 0;">34.2</div>
<div class="a" style="left:29px;top:454px;width:707px;height:13px;background:#d9d9d9;"></div>
<div class="a" style="left:29px;top:467px;width:707px;height:1px;background:#e8e8e8;"></div>
<div class="a" style="left:15px;top:467px;width:13px;height:1px;background:#808080;"></div>
<div class="t" style="left:31.00px;top:458.00px;font-size:8.2px;line-height:8.2px;color:#000;transform:scaleX(0.9533);transform-origin:0 0;">HKTD 1994 (HK)</div>
<div class="t" style="left:176.70px;top:458.00px;font-size:8.2px;line-height:8.2px;color:#000;transform:scaleX(0.9546);transform-origin:0 0;">Private Cars</div>
<div class="t" style="left:361.70px;top:458.00px;font-size:8.2px;line-height:8.2px;color:#000;letter-spacing:0.047px;">Voiture de tourisme</div>
<div class="t" style="left:459.70px;top:458.00px;font-size:8.2px;line-height:8.2px;color:#000;transform:scaleX(0.9663);transform-origin:0 0;">Asie</div>
<div class="t" style="left:550.70px;top:458.00px;font-size:8.2px;line-height:8.2px;color:#000;transform:scaleX(0.9720);transform-origin:0 0;">2.74</div>
<div class="t" style="left:605.70px;top:458.00px;font-size:8.2px;line-height:8.2px;color:#000;transform:scaleX(0.9720);transform-origin:0 0;">1.75</div>
<div class="t" style="left:650.70px;top:458.00px;font-size:8.2px;line-height:8.2px;color:#000;transform:scaleX(0.9720);transform-origin:0 0;">4.57</div>
<div class="t" style="left:697.70px;top:458.00px;font-size:8.2px;line-height:8.2px;color:#000;transform:scaleX(0.9720);transform-origin:0 0;">26.1</div>
<div class="a" style="left:29px;top:468px;width:707px;height:4px;background:#ffffff;"></div>
<div class="a" style="left:174px;top:280px;width:1px;height:192px;background:rgba(0,0,0,0.09);"></div>
<div class="a" style="left:359px;top:280px;width:1px;height:192px;background:#6e6e6e;"></div>
<div class="a" style="left:457px;top:280px;width:1px;height:192px;background:rgba(0,0,0,0.09);"></div>
<div class="a" style="left:548px;top:280px;width:1px;height:192px;background:rgba(0,0,0,0.09);"></div>
<div class="a" style="left:603px;top:280px;width:1px;height:192px;background:rgba(0,0,0,0.09);"></div>
<div class="a" style="left:648px;top:280px;width:1px;height:192px;background:rgba(0,0,0,0.09);"></div>
<div class="a" style="left:695px;top:280px;width:1px;height:192px;background:rgba(0,0,0,0.09);"></div>
<div class="a" style="left:14px;top:263px;width:737px;height:1px;background:#a0a0a0;"></div>
<div class="a" style="left:14px;top:279px;width:722px;height:1px;background:#a0a0a0;"></div>
<div class="a" style="left:28px;top:264px;width:1px;height:15px;background:#8c8c8c;"></div>
<div class="a" style="left:174px;top:264px;width:1px;height:15px;background:#8c8c8c;"></div>
<div class="a" style="left:359px;top:264px;width:1px;height:15px;background:#8c8c8c;"></div>
<div class="a" style="left:457px;top:264px;width:1px;height:15px;background:#8c8c8c;"></div>
<div class="a" style="left:548px;top:264px;width:1px;height:15px;background:#8c8c8c;"></div>
<div class="a" style="left:603px;top:264px;width:1px;height:15px;background:#8c8c8c;"></div>
<div class="a" style="left:648px;top:264px;width:1px;height:15px;background:#8c8c8c;"></div>
<div class="a" style="left:695px;top:264px;width:1px;height:15px;background:#8c8c8c;"></div>
<div class="t" style="left:31.00px;top:270.00px;font-size:8.2px;line-height:8.2px;color:#000;transform:scaleX(0.9673);transform-origin:0 0;">Bibliothèque</div>
<div class="t" style="left:177.20px;top:270.00px;font-size:8.2px;line-height:8.2px;color:#000;letter-spacing:0.044px;">Nom du véhicule</div>
<div class="t" style="left:362.20px;top:270.00px;font-size:8.2px;line-height:8.2px;color:#000;transform:scaleX(0.9189);transform-origin:0 0;">Classe</div>
<div class="t" style="left:460.20px;top:270.00px;font-size:8.2px;line-height:8.2px;color:#000;transform:scaleX(0.9710);transform-origin:0 0;">Région</div>
<div class="t" style="left:551.20px;top:270.00px;font-size:8.2px;line-height:8.2px;color:#000;letter-spacing:-0.120px;">Empattement</div>
<div class="t" style="left:606.20px;top:270.00px;font-size:8.2px;line-height:8.2px;color:#000;letter-spacing:0.127px;">Larg. ...</div>
<div class="t" style="left:651.20px;top:270.00px;font-size:8.2px;line-height:8.2px;color:#000;letter-spacing:-0.058px;">Longueur</div>
<div class="a" style="left:695px;top:265px;width:41px;height:14px;overflow:hidden;"><div class="t" style="left:3.00px;top:5.00px;font-size:8.2px;line-height:8.2px;color:#000;letter-spacing:-0.12px;">Braquage...</div>
</div>
<svg style="left:637px;top:267px" width="11" height="11" viewBox="0 0 11 11"><path d="M1.2 9.6L5.2 1.6L9.2 9.6Z" fill="none" stroke="#7a7a7a" stroke-width="0.7"/></svg>
<div class="a" style="left:14px;top:263px;width:1px;height:222px;background:#808080;"></div>
<div class="a" style="left:28px;top:264px;width:1px;height:208px;background:#808080;"></div>
<div class="a" style="left:750px;top:263px;width:1px;height:223px;background:#e3e3e3;"></div>
<div class="a" style="left:14px;top:485px;width:737px;height:1px;background:#e3e3e3;"></div>
<div class="a" style="left:742px;top:290px;width:2px;height:13px;background:#8a8a8a;border-radius:1px;"></div>
<div class="a" style="left:742.5px;top:277px;width:1.0px;height:1px;background:#b8b8b8;"></div>
<div class="a" style="left:28px;top:477.5px;width:303px;height:1.8000000000000114px;background:#858585;border-radius:1px;"></div>
<div class="a" style="left:16px;top:514px;width:18px;height:19px;background:#fbfbfb;border:1px solid #e3e3e3;border-radius:3px;"></div>
<div class="a" style="left:38px;top:514px;width:18px;height:19px;background:#fbfbfb;border:1px solid #e3e3e3;border-radius:3px;"></div>
<div class="a" style="left:103px;top:514px;width:19px;height:19px;background:#fbfbfb;border:1px solid #e3e3e3;border-radius:3px;"></div>
<div class="a" style="left:167px;top:514px;width:19px;height:19px;background:#fbfbfb;border:1px solid #e3e3e3;border-radius:3px;"></div>
<div class="a" style="left:255px;top:514px;width:18px;height:19px;background:#fbfbfb;border:1px solid #e3e3e3;border-radius:3px;"></div>
<svg style="left:0;top:500px" width="300" height="40" viewBox="0 500 300 40"><path d="M18.1 521.3H25.1V527.3H18.1Z" fill="#86bde8" stroke="#1e2228" stroke-width="0.8"/><path d="M25.1 522H28.2L30.6 524.8V527.3H25.1Z" fill="#86bde8" stroke="#1e2228" stroke-width="0.8"/><path d="M26.3 522.8H27.8L29.3 524.6H26.3Z" fill="#fff" stroke="#1e2228" stroke-width="0.5"/><circle cx="20.8" cy="528.2" r="1.3" fill="#1e2228"/><circle cx="27" cy="528.2" r="1.3" fill="#1e2228"/><path d="M21.1 517.1L21.9 519L23.9 518.2L23.2 520.1L24.9 521L23 521.6L23.3 523.6L21.6 522.5L20.2 523.8L19.9 521.8L17.9 521.5L19.3 520.1L18.4 518.3L20.4 518.9Z" fill="#f77f00" stroke="#ffb300" stroke-width="0.3"/><path d="M40 521H47.3V527.6H40Z" fill="#86bde8" stroke="#1e2228" stroke-width="0.8"/><path d="M42.7 522.5H49.1V527.6H42.7Z" fill="#8fc3ea" stroke="#1e2228" stroke-width="0.7"/><path d="M49.1 524H50.8L52.4 526V527.6H49.1Z" fill="#fff" stroke="#1e2228" stroke-width="0.6"/><circle cx="44.8" cy="528.5" r="1.1" fill="#1e2228"/><circle cx="48.8" cy="528.5" r="1.1" fill="#1e2228"/><path d="M46.2 519.2Q48.6 517 51 518.9" fill="none" stroke="#1e2228" stroke-width="0.8"/><path d="M50 519.4L52 520.4L51.9 517.9Z" fill="#1e2228"/><path d="M106.5 521.4H114V527.9H106.5Z" fill="#86bde8" stroke="#1e2228" stroke-width="0.8"/><path d="M114 523H115.8L117.7 525.4V527.9H114Z" fill="#86bde8" stroke="#1e2228" stroke-width="0.8"/><path d="M114.6 523.7H115.6L116.7 525.2H114.6Z" fill="#fff"/><circle cx="108.7" cy="528.8" r="1.3" fill="#1e2228"/><circle cx="115.7" cy="528.8" r="1.3" fill="#1e2228"/><path d="M109 521.8L109.6 518.6Q110.1 517.6 110.6 518.6L111.3 521.8Z" fill="#e8901c" stroke="#3a3020" stroke-width="0.5"/><path d="M170 519.2Q174.5 517.2 179 519.2V527.2Q174.5 529.4 170 527.2Z" fill="#3b4048"/><ellipse cx="174.5" cy="519" rx="4.5" ry="1.4" fill="#2a2e35"/><path d="M170 521.6Q174.5 523.2 179 521.6M170 524.2Q174.5 525.8 179 524.2M170 526.6Q174 528 176 527.6" fill="none" stroke="#e8e8e8" stroke-width="0.7"/><path d="M175 526.3L178.6 522.7L182.2 526.3L178.6 529.9Z" fill="#5cc85c" stroke="#2aa02a" stroke-width="0.6"/><rect x="258" y="517" width="5.8" height="5.8" fill="#2f9a3e" stroke="#2a2f38" stroke-width="0.7"/><rect x="264.6" y="517" width="5.6" height="5.8" fill="#d8232a" stroke="#2a2f38" stroke-width="0.7"/><path d="M259.3 519.9H262.5" stroke="#fff" stroke-width="1.1"/><path d="M265.9 518.5L268.9 521.3M268.9 518.5L265.9 521.3" stroke="#fff" stroke-width="0.7"/><rect x="259.3" y="524" width="2" height="2" fill="#3a404a"/><rect x="263" y="524" width="2" height="2" fill="#3a404a"/><rect x="266.8" y="524" width="2" height="2" fill="#3a404a"/><path d="M258 530.2V528.6Q259.2 526.8 260.3 526.8Q261.4 526.8 262.2 528.2Q263 526.8 264 526.8Q265 526.8 265.8 528.2Q266.6 526.8 267.8 526.8Q269 526.8 270.2 528.6V530.2Z" fill="#2a2f38"/></svg>
<div class="a" style="left:574px;top:517px;width:55px;height:16px;background:#fdfdfd;border:1px solid #3b86d4;border-radius:3px;"></div>
<div class="a" style="left:637px;top:517px;width:53px;height:16px;background:#fdfdfd;border:1px solid #d9d9d9;border-bottom-color:#cacaca;border-radius:3px;"></div>
<div class="a" style="left:698px;top:517px;width:53px;height:16px;background:#fdfdfd;border:1px solid #d9d9d9;border-bottom-color:#cacaca;border-radius:3px;"></div>
<div class="t" style="left:596.50px;top:522.00px;font-size:8.2px;line-height:8.2px;color:#000;letter-spacing:-0.4px;">OK</div>
<div class="t" style="left:649.00px;top:522.00px;font-size:8.2px;line-height:8.2px;color:#000;transform:scaleX(0.9704);transform-origin:0 0;">Annuler</div>
<div class="t" style="left:715.70px;top:522.00px;font-size:8.2px;line-height:8.2px;color:#000;letter-spacing:-0.130px;">Aide</div>
<svg style="left:750px;top:534px" width="7" height="7" viewBox="0 0 7 7"><g fill="#9a9a9a"><rect x="5" y="1" width="1" height="1"/><rect x="3" y="3" width="1" height="1"/><rect x="5" y="3" width="1" height="1"/><rect x="1" y="5" width="1" height="1"/><rect x="3" y="5" width="1" height="1"/><rect x="5" y="5" width="1" height="1"/></g></svg>
<div class="a" style="left:5.2px;top:254.1px;width:29.599999999999998px;height:236.50000000000003px;border:3.2px solid #e31a1c;"></div>
<div class="a" style="left:10.4px;top:499.9px;width:75.6px;height:41.89999999999998px;border:3.3px solid #e31a1c;border-bottom-left-radius:5px;"></div>
</body></html>
